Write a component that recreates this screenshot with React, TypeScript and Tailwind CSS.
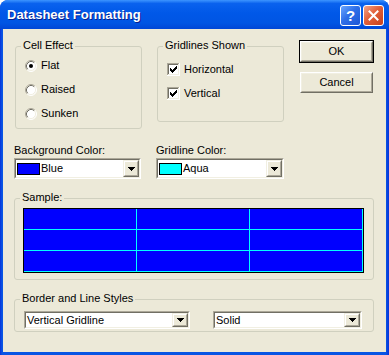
import React from "react";

function Radio({ checked }: { checked?: boolean }) {
  return (
    <svg width="12" height="12" viewBox="0 0 12 12" className="shrink-0">
      <circle cx="6" cy="6" r="5" fill="#fff" />
      <path d="M2.11 9.89A5.5 5.5 0 0 1 9.89 2.11" fill="none" stroke="#ACA899" />
      <path d="M9.89 2.11A5.5 5.5 0 0 1 2.11 9.89" fill="none" stroke="#FFFFFF" />
      <path d="M2.82 9.18A4.5 4.5 0 0 1 9.18 2.82" fill="none" stroke="#716F64" />
      <path d="M9.18 2.82A4.5 4.5 0 0 1 2.82 9.18" fill="none" stroke="#F1EFE2" />
      {checked && <circle cx="6" cy="6" r="2" fill="#000" />}
    </svg>
  );
}

function Check() {
  return (
    <svg width="13" height="13" viewBox="0 0 13 13" shapeRendering="crispEdges" className="shrink-0">
      <rect width="13" height="13" fill="#fff" />
      <rect x="0" y="0" width="12" height="1" fill="#ACA899" />
      <rect x="0" y="0" width="1" height="12" fill="#ACA899" />
      <rect x="1" y="1" width="10" height="1" fill="#716F64" />
      <rect x="1" y="1" width="1" height="10" fill="#716F64" />
      <rect x="1" y="11" width="11" height="1" fill="#F1EFE2" />
      <rect x="11" y="1" width="1" height="11" fill="#F1EFE2" />
      <path
        d="M9 3h1v1h-1z M8 4h2v1h-2z M3 5h1v1h-1z M7 5h3v1h-3z M3 6h2v1h-2z M6 6h3v1h-3z M3 7h5v1h-5z M4 8h3v1h-3z M5 9h1v1h-1z"
        fill="#000"
      />
    </svg>
  );
}

function Arrow() {
  return (
    <svg width="7" height="4" viewBox="0 0 7 4" shapeRendering="crispEdges">
      <path d="M0 0h7v1h-7z M1 1h5v1h-5z M2 2h3v1h-3z M3 3h1v1h-1z" fill="#000" />
    </svg>
  );
}

function Combo({ className, children }: { className: string; children: React.ReactNode }) {
  return (
    <div className={`border border-t-[#ACA899] border-l-[#ACA899] border-r-white border-b-white ${className}`}>
      <div className="flex h-full border border-t-[#716F64] border-l-[#716F64] border-r-[#F1EFE2] border-b-[#F1EFE2] bg-white">
        <div className="flex min-w-0 flex-1 items-center">{children}</div>
        <div className="h-full w-[16px] border border-t-[#F1EFE2] border-l-[#F1EFE2] border-r-[#716F64] border-b-[#716F64] bg-[#ECE9D8]">
          <div className="flex h-full items-center justify-center border border-t-white border-l-white border-r-[#ACA899] border-b-[#ACA899]">
            <Arrow />
          </div>
        </div>
      </div>
    </div>
  );
}

function Group({ label, className, children }: { label: string; className: string; children?: React.ReactNode }) {
  return (
    <div className={`relative rounded-[3px] border border-[#D0D0BF] ${className}`}>
      <span className="absolute left-[5px] top-[-8px] bg-[#ECE9D8] px-[2px] leading-[13px]">{label}</span>
      {children}
    </div>
  );
}

function Button({ label, isDefault }: { label: string; isDefault?: boolean }) {
  return (
    <div className={`h-[23px] w-[75px] border ${isDefault ? "border-black" : "border-transparent"}`}>
      <div className="h-full border border-t-white border-l-white border-r-[#716F64] border-b-[#716F64]">
        <div className="flex h-full items-center justify-center border border-t-[#F1EFE2] border-l-[#F1EFE2] border-r-[#ACA899] border-b-[#ACA899] leading-[13px]">
          {label}
        </div>
      </div>
    </div>
  );
}

export default function App() {
  return (
    <div className="h-[355px] w-[389px] bg-white font-['Liberation_Sans',Arial,sans-serif] text-[11px] text-black">
      <div className="flex h-[355px] w-[389px] flex-col overflow-hidden rounded-t-[8px] bg-[linear-gradient(90deg,#0831D9_0px,#0855E4_2px,#0855E4_386px,#0831D9_389px)]">
        {/* title bar */}
        <div className="flex h-[29px] shrink-0 items-start bg-[linear-gradient(180deg,#3D95FF_0%,#0A62EE_12%,#0058E8_45%,#0055E3_80%,#0046D6_100%)] pl-[7px] pr-[5px]">
          <span className="mt-[7px] text-[13px] font-bold leading-[15px] text-white [text-shadow:1px_1px_0_#0A1F8C]">
            Datasheet Formatting
          </span>
          <div className="ml-auto mt-[5px] flex gap-[2px]">
            <div className="flex h-[21px] w-[21px] items-center justify-center rounded-[3px] border border-white bg-[linear-gradient(135deg,#6AA6FF_0%,#2F6FE8_45%,#1D56D6_100%)] text-[15px] font-bold leading-[15px] text-white">
              ?
            </div>
            <div className="flex h-[21px] w-[21px] items-center justify-center rounded-[3px] border border-white bg-[linear-gradient(135deg,#F2A48A_0%,#E2603A_45%,#C8401A_100%)]">
              <svg width="11" height="11" viewBox="0 0 11 11">
                <path d="M1.5 1.5L9.5 9.5M9.5 1.5L1.5 9.5" stroke="#fff" strokeWidth="2" strokeLinecap="square" />
              </svg>
            </div>
          </div>
        </div>

        {/* body */}
        <div className="mx-[3px] mb-[3px] flex flex-1 flex-col bg-[#ECE9D8]">
          {/* row 1 */}
          <div className="flex items-start pl-[12px] pt-[11px]">
            <Group label="Cell Effect" className="mt-[6px] h-[83px] w-[127px]">
              <div className="flex flex-col gap-[11px] pl-[9px] pt-[12px]">
                <div className="flex h-[13px] items-center gap-[4px] leading-[13px]">
                  <Radio checked />
                  <span>Flat</span>
                </div>
                <div className="flex h-[13px] items-center gap-[4px] leading-[13px]">
                  <Radio />
                  <span>Raised</span>
                </div>
                <div className="flex h-[13px] items-center gap-[4px] leading-[13px]">
                  <Radio />
                  <span>Sunken</span>
                </div>
              </div>
            </Group>
            <Group label="Gridlines Shown" className="ml-[15px] mt-[6px] h-[76px] w-[127px]">
              <div className="flex flex-col gap-[11px] pl-[9px] pt-[16px]">
                <div className="flex h-[13px] items-center gap-[4px] leading-[13px]">
                  <Check />
                  <span>Horizontal</span>
                </div>
                <div className="flex h-[13px] items-center gap-[4px] leading-[13px]">
                  <Check />
                  <span>Vertical</span>
                </div>
              </div>
            </Group>
            <div className="ml-[15px] flex flex-col gap-[8px]">
              <Button label="OK" isDefault />
              <Button label="Cancel" />
            </div>
          </div>

          {/* row 2 */}
          <div className="mt-[15px] flex gap-[15px] pl-[11px]">
            <div className="flex w-[127px] flex-col">
              <span className="h-[13px] leading-[13px]">Background Color:</span>
              <Combo className="mt-[1px] h-[21px] w-[127px]">
                <div className="ml-[1px] h-[12px] w-[23px] border border-black bg-[#0000FF]" />
                <span className="ml-[1px] leading-[13px]">Blue</span>
              </Combo>
            </div>
            <div className="flex w-[128px] flex-col">
              <span className="h-[13px] leading-[13px]">Gridline Color:</span>
              <Combo className="mt-[1px] h-[21px] w-[128px]">
                <div className="ml-[1px] h-[12px] w-[23px] border border-black bg-[#00FFFF]" />
                <span className="ml-[1px] leading-[13px]">Aqua</span>
              </Combo>
            </div>
          </div>

          {/* row 3 */}
          <Group label="Sample:" className="ml-[11px] mt-[19px] h-[82px] w-[360px]">
            <div className="pl-[8px] pt-[9px]">
              <div className="w-[341px] border border-black">
                <div className="grid w-[339px] grid-cols-3">
                  {Array.from({ length: 9 }).map((_, i) => (
                    <div key={i} className="h-[21px] border-b border-r border-[#00FFFF] bg-[#0000FF]" />
                  ))}
                </div>
              </div>
            </div>
          </Group>

          {/* row 4 */}
          <Group label="Border and Line Styles" className="ml-[11px] mt-[19px] h-[33px] w-[360px]">
            <div className="flex gap-[23px] pl-[9px] pt-[11px]">
              <Combo className="h-[18px] w-[166px]">
                <span className="ml-[1px] leading-[13px]">Vertical Gridline</span>
              </Combo>
              <Combo className="h-[18px] w-[149px]">
                <span className="ml-[1px] leading-[13px]">Solid</span>
              </Combo>
            </div>
          </Group>
        </div>
      </div>
    </div>
  );
}
